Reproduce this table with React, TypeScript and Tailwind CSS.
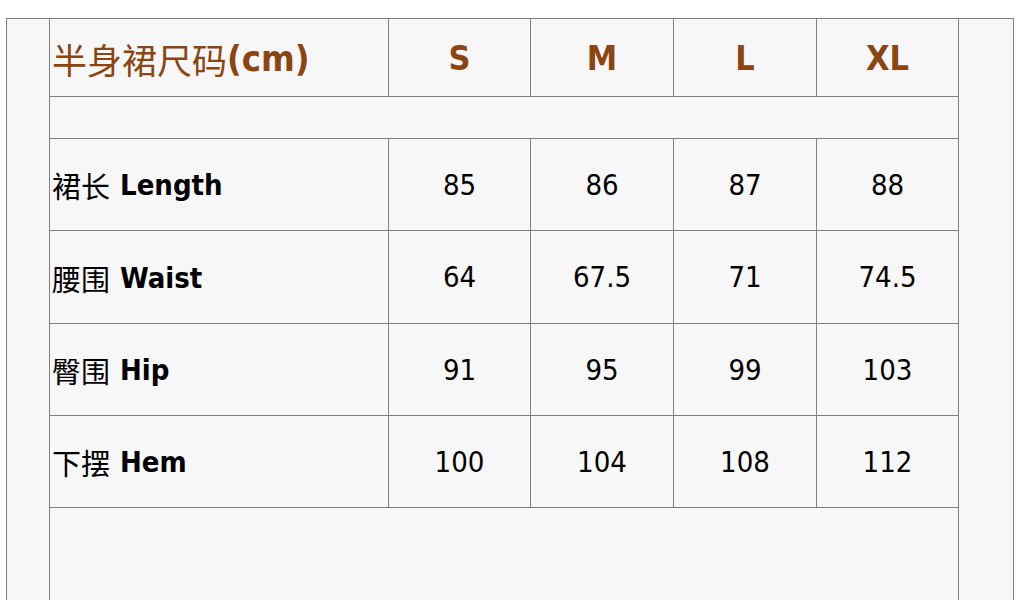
const rows = [
  { zh: '裙长', en: 'Length', v: ['85', '86', '87', '88'] },
  { zh: '腰围', en: 'Waist', v: ['64', '67.5', '71', '74.5'] },
  { zh: '臀围', en: 'Hip', v: ['91', '95', '99', '103'] },
  { zh: '下摆', en: 'Hem', v: ['100', '104', '108', '112'] },
];

const sizes = ['S', 'M', 'L', 'XL'];
const colW = ['w-[142px]', 'w-[143px]', 'w-[143px]', 'w-[141px]'];

const latin = "font-['DejaVu_Sans_Condensed','DejaVu_Sans',sans-serif]";
const cjk = "font-['Noto_Sans_CJK_SC',sans-serif]";

export default function App() {
  return (
    <div className="h-[600px] overflow-hidden bg-white pt-[18px] pl-[6px]">
      <div className="w-[1008px] h-[583px] border border-[#808080] bg-[#f7f7f7] pl-[42px]">
        <div className="w-[910px] h-full border-l border-r border-[#808080]">
          {/* Header */}
          <div className="flex h-[78px] border-b border-[#808080] text-[#8b4513]">
            <div className="w-[339px] border-r border-[#808080] flex items-center pl-[2px] pt-[2px]">
              <span className={`${cjk} text-[35px] leading-none`}>半身裙尺码</span>
              <span className={`${latin} text-[36px] font-bold leading-none`}>(cm)</span>
            </div>
            {sizes.map((s, i) => (
              <div
                key={s}
                className={`${colW[i]} ${i < 3 ? 'border-r border-[#808080]' : ''} flex items-center justify-center pt-[2px] ${latin} text-[34px] font-bold`}
              >
                {s}
              </div>
            ))}
          </div>

          {/* Spacer row */}
          <div className="h-[42px] border-b border-[#808080]" />

          {/* Data */}
          {rows.map((r, ri) => (
            <div
              key={r.en}
              className={`flex ${ri === 1 ? 'h-[93px]' : 'h-[92px]'} border-b border-[#808080] text-black`}
            >
              <div className="w-[339px] border-r border-[#808080] flex items-center pl-[2px] pt-[2px]">
                <span className={`${cjk} text-[29px] leading-none`}>{r.zh}</span>
                <span className={`${latin} text-[29px] font-bold leading-none ml-[10px]`}>{r.en}</span>
              </div>
              {r.v.map((v, i) => (
                <div
                  key={i}
                  className={`${colW[i]} ${i < 3 ? 'border-r border-[#808080]' : ''} flex items-center justify-center pt-[2px] ${latin} text-[29px]`}
                >
                  {v}
                </div>
              ))}
            </div>
          ))}
        </div>
      </div>
    </div>
  );
}
